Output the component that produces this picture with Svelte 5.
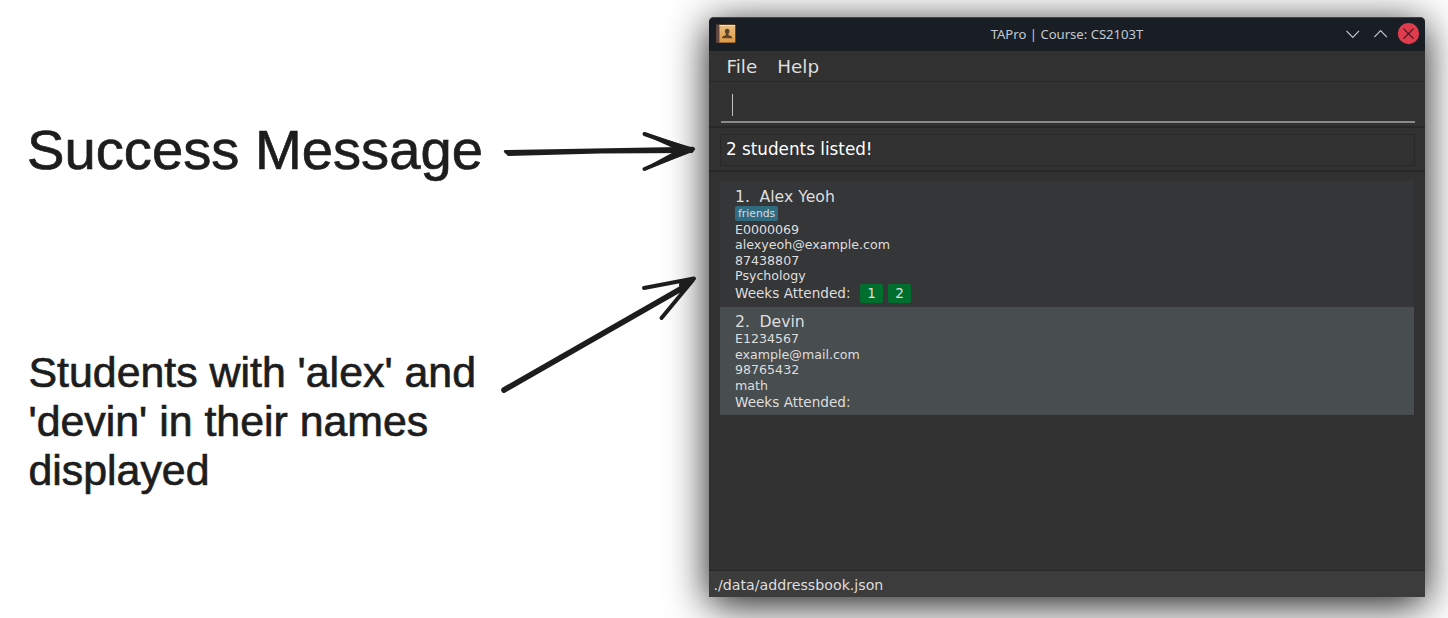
<script>
  const students = [
    { name: 'Alex Yeoh', tags: ['friends'], details: ['E0000069', 'alexyeoh@example.com', '87438807', 'Psychology'], weeks: [1, 2] },
    { name: 'Devin', tags: [], details: ['E1234567', 'example@mail.com', '98765432', 'math'], weeks: [] }
  ];
</script>

<main>
  <section class="notes">
    <h1>Success Message</h1>
    <p>Students with 'alex' and<br />'devin' in their names<br />displayed</p>
  </section>

  <div class="window">
    <header>
      <svg class="book" width="20" height="20" viewBox="0 0 20 20">
        <defs>
          <linearGradient id="cover" x1="0" y1="0" x2="0" y2="1">
            <stop offset="0" stop-color="#e8bd86" />
            <stop offset="1" stop-color="#e09c40" />
          </linearGradient>
        </defs>
        <rect x="0.3" y="0.5" width="19.2" height="18.6" rx="1" fill="#8a5a2c" />
        <rect x="0.5" y="0.8" width="3" height="18" fill="#5d4548" />
        <rect x="3.5" y="1" width="15.6" height="17.2" fill="url(#cover)" />
        <path d="M3.5 1.500H19" stroke="#f8ddb4" />
        <path d="M11.2 4.800c-1.700 0-2.400 1-2.400 2.400 0 1.300.6 2 1.100 2.600v1.200c-1.600.7-3.900 1-3.900 3.300h10.400c0-2.300-2.500-2.600-4-3.300V9.800c.6-.6 1.100-1.300 1.100-2.600 0-1.400-.7-2.400-2.300-2.400z" fill="#5b4228" />
      </svg>
      <span class="title">TAPro | Course: CS2103T</span>
      <svg class="controls" width="80" height="24" viewBox="0 0 80 24" fill="none">
        <path d="M4.500 8.900L10.800 15.300L17.100 8.900M32.300 15.100L38.600 8.700L44.900 15.100" stroke="#c3c7cb" stroke-width="1.200" />
        <circle cx="66.500" cy="11.600" r="10.600" fill="#e03c4c" />
        <path d="M61.500 6.600L71.500 16.600M71.500 6.600L61.500 16.600" stroke="#262029" stroke-width="1.200" />
      </svg>
    </header>
    <nav><span>File</span><span>Help</span></nav>
    <div class="command"><div class="field"><i></i></div></div>
    <div class="result"><div class="message">2 students listed!</div></div>
    <div class="list">
      {#each students as s, i}
        <article class:alt={i % 2 === 1}>
          <h2>{i + 1}.<b>{s.name}</b></h2>
          {#if s.tags.length}
            <div class="tags">{#each s.tags as t}<span>{t}</span>{/each}</div>
          {/if}
          {#each s.details as d}<div class="detail">{d}</div>{/each}
          <div class="weeks"><span>Weeks Attended:</span>{#each s.weeks as w}<em>{w}</em>{/each}</div>
        </article>
      {/each}
    </div>
    <footer>./data/addressbook.json</footer>
  </div>

  <svg class="arrows" width="1448" height="618" viewBox="0 0 1448 618" fill="#1d1d1d" stroke="#1d1d1d" stroke-linejoin="round" stroke-linecap="round">
    <path d="M505 151L693 147.800L694.200 149L692 152L600 152.400L508.500 155L504.800 151.500Z" stroke-width="2" />
    <path d="M644.500 134L688 149M644.500 169L691 150" stroke-width="4" />
    <path d="M644.500 134L692 148.500L678 149ZM644.500 169L692 151L676 152Z" stroke-width="2" />
    <path d="M504 390L685 286.500" stroke-width="5.600" />
    <path d="M644 288L694 278.500M661.500 318L693 280" stroke-width="4" />
    <path d="M680 284L693.500 278.500L681 295Z" stroke-width="2" />
  </svg>
</main>

<style>
  :global(body) { margin: 0; background: #fff; overflow: hidden; }
  main { position: relative; width: 1448px; height: 618px; display: flex; overflow: hidden; box-sizing: border-box; padding-top: 17px; }
  .notes { width: 709px; flex: none; box-sizing: border-box; padding: 100px 0 0 27px; color: #1d1d1d; font-family: "Liberation Sans", Arial, sans-serif; -webkit-text-stroke: 0.700px #1d1d1d; }
  h1 { margin: 0; font-weight: 400; font-size: 56.200px; line-height: 65px; white-space: nowrap; }
  p { margin: 166px 0 0 1.500px; font-size: 42.850px; line-height: 49.200px; white-space: nowrap; }
  .window { width: 716px; height: 580px; flex: none; display: flex; flex-direction: column; background: #313131; border-radius: 5px 5px 0 0; box-shadow: 0 7px 40px rgba(0, 0, 0, 0.920); font-family: "DejaVu Sans", sans-serif; color: #dedede; box-sizing: border-box; }
  header { height: 33.500px; flex: none; display: grid; grid-template-columns: 90px 1fr 90px; align-items: center; background: #191e25; border-radius: 5px 5px 0 0; border-top: 1px solid #41464b; box-sizing: border-box; }
  .book { margin-left: 7px; }
  .title { text-align: center; font: 13.100px "Noto Sans", sans-serif; color: #c3c8ce; }
  .controls { justify-self: end; margin-right: 3px; }
  nav { height: 31px; flex: none; box-sizing: border-box; border-bottom: 1px solid #272727; padding-left: 17.500px; display: flex; gap: 20px; font-size: 18.350px; line-height: 31px; }
  .command { height: 46.500px; flex: none; box-sizing: border-box; border-bottom: 2px solid #282828; padding: 0 10px 0 12px; }
  .field { height: 41px; box-sizing: border-box; border-bottom: 2px solid #898b8b; padding: 12px 0 0 10.500px; }
  .field i { display: block; width: 1px; height: 22px; background: #c0c0c0; }
  .result { height: 44px; flex: none; box-sizing: border-box; border-bottom: 2px solid #282828; padding: 6px 10px 0 11px; }
  .message { height: 32px; box-sizing: border-box; border: 1px solid #282828; padding-left: 5px; color: #fff; font-size: 16.800px; line-height: 29px; }
  .list { flex: 1; padding: 9px 11px 0 11px; }
  article { background: #353638; height: 126px; box-sizing: border-box; padding: 7px 0 0 15px; }
  .alt { background: #484d4f; height: 108px; padding-top: 6px; }
  h2 { margin: 0; font-weight: 400; font-size: 15.700px; line-height: 18px; height: 18px; display: flex; gap: 9.500px; }
  b { font-weight: 400; }
  .tags { height: 15px; margin-bottom: 0.500px; display: flex; }
  .tags span { background: #316b80; border-radius: 2px; padding: 0 3px; font-size: 10.800px; line-height: 15px; color: #d5dde0; }
  .detail { height: 15.500px; font-size: 12.620px; line-height: 15.500px; }
  .weeks { height: 20px; display: flex; align-items: center; gap: 5px; font-size: 13.600px; line-height: 20px; }
  .weeks span { margin-right: 4.500px; position: relative; top: -1px; }
  em { font-style: normal; width: 23px; height: 19px; line-height: 19px; text-align: center; background: #006e2c; border-radius: 2px; }
  footer { height: 27px; flex: none; box-sizing: border-box; background: #3c3c3c; border-top: 1px solid #292929; padding-left: 4.500px; font-size: 14.200px; line-height: 28px; }
  .arrows { position: absolute; left: 0; top: 0; pointer-events: none; }
</style>
